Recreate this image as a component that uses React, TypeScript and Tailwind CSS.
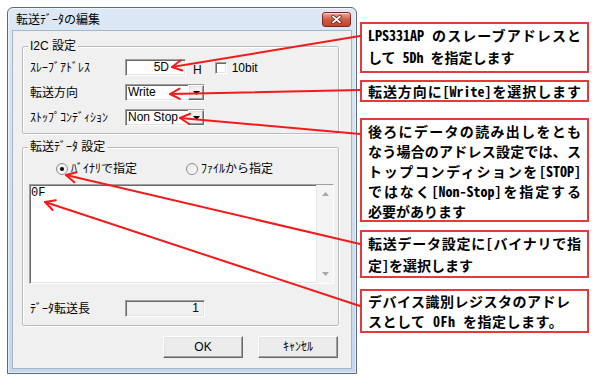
import React from "react";

const RED = "#f21b1b";

const sunken =
  "border border-t-[#a0a0a0] border-l-[#a0a0a0] border-b-white border-r-white shadow-[inset_1px_1px_0_#696969,inset_-1px_-1px_0_#e3e3e3]";
const raised =
  "border border-t-white border-l-white border-b-[#696969] border-r-[#696969] shadow-[inset_-1px_-1px_0_#a0a0a0,inset_1px_1px_0_#e3e3e3]";

function Arrow({ x1, y1, x2, y2 }: { x1: number; y1: number; x2: number; y2: number }) {
  const dx = x1 - x2;
  const dy = y1 - y2;
  const len = Math.hypot(dx, dy);
  const ux = dx / len;
  const uy = dy / len;
  const a = (28 * Math.PI) / 180;
  const L = 11;
  const w1x = x2 + L * (ux * Math.cos(a) - uy * Math.sin(a));
  const w1y = y2 + L * (ux * Math.sin(a) + uy * Math.cos(a));
  const w2x = x2 + L * (ux * Math.cos(-a) - uy * Math.sin(-a));
  const w2y = y2 + L * (ux * Math.sin(-a) + uy * Math.cos(-a));
  return (
    <g stroke={RED} strokeWidth={2} fill="none" strokeLinecap="round" strokeLinejoin="round">
      <line x1={x1} y1={y1} x2={x2} y2={y2} />
      <polyline points={`${w1x},${w1y} ${x2},${y2} ${w2x},${w2y}`} />
    </g>
  );
}

function DownTri({ color = "#000" }: { color?: string }) {
  return (
    <svg width="7" height="4" viewBox="0 0 7 4">
      <polygon points="0,0 7,0 3.5,4" fill={color} />
    </svg>
  );
}

function UpTri({ color = "#000" }: { color?: string }) {
  return (
    <svg width="7" height="4" viewBox="0 0 7 4">
      <polygon points="0,4 7,4 3.5,0" fill={color} />
    </svg>
  );
}

function Combo({ value }: { value: string }) {
  return (
    <div className={`w-[80px] h-[17px] bg-white flex ${sunken}`}>
      <div className="flex-1 pl-[2px] text-[12px] leading-[15px] text-black">{value}</div>
      <div className={`w-[16px] h-[15px] bg-[#f0f0f0] flex items-center justify-center ${raised}`}>
        <DownTri />
      </div>
    </div>
  );
}

function Radio({ checked }: { checked?: boolean }) {
  return (
    <div className="w-[12px] h-[12px] rounded-full border border-[#8e8f8f] bg-gradient-to-br from-[#e6e6e6] to-white flex items-center justify-center">
      {checked ? <div className="w-[4px] h-[4px] rounded-full bg-black" /> : null}
    </div>
  );
}

function J({ children }: { children: React.ReactNode }) {
  return <div className="text-justify [text-align-last:justify]">{children}</div>;
}

function CloseBtn() {
  return (
    <div className="mt-[4px] mr-[1px] w-[29px] h-[15px] rounded-[3px] border border-[#7b2a1f] bg-gradient-to-b from-[#eaa898] via-[#d25a46] to-[#c5432f] shadow-[inset_0_1px_0_rgba(255,255,255,0.5)] flex items-center justify-center">
      <svg width="11" height="9" viewBox="0 0 11 9">
        <path d="M2 1.5 L9 7.5 M9 1.5 L2 7.5" stroke="#5e1d14" strokeWidth="3.4" strokeLinecap="round" />
        <path d="M2 1.5 L9 7.5 M9 1.5 L2 7.5" stroke="#ffffff" strokeWidth="1.8" strokeLinecap="round" />
      </svg>
    </div>
  );
}

export default function App() {
  const dialogFont = { fontFamily: '"Liberation Sans", "Noto Sans CJK JP", sans-serif' };
  return (
    <div className="relative w-[601px] h-[386px] bg-white overflow-hidden flex items-start">
      {/* Dialog window */}
      <div
        className="ml-[7px] mt-[7px] w-[350px] h-[367px] shrink-0 rounded-t-[6px] border border-[#5f6b78] bg-gradient-to-b from-[#dce8f5] via-[#cfe0f1] to-[#c3d7ed] flex flex-col px-[4px] pb-[4px] shadow-[inset_0_0_0_1px_rgba(255,255,255,0.55)]"
        style={dialogFont}
      >
        <div className="h-[22px] flex items-start justify-between">
          <span className="pl-[4px] pt-[5px] text-[12px] leading-[14px] text-black">転送ﾃﾞｰﾀの編集</span>
          <CloseBtn />
        </div>
        <div className="flex-1 bg-[#f0f0f0] border border-[#a6b6c7] flex flex-col pl-[9px] pt-[15px] text-[12px] leading-[14px] text-black">
          {/* Group 1 */}
          <div className="relative w-[317px] h-[88px] border border-[#bcbcbc] rounded-[2px] shadow-[inset_1px_1px_0_#fff,1px_1px_0_#fff]">
            <span className="absolute left-[5px] -top-[8px] px-[2px] bg-[#f0f0f0]">I2C 設定</span>
            <div className="flex flex-col pl-[7px] pt-[12px] gap-[8px]">
              <div className="flex items-center h-[17px]">
                <span className="w-[95px]">ｽﾚｰﾌﾞｱﾄﾞﾚｽ</span>
                <div className={`w-[61px] h-[17px] bg-white text-right pr-[16px] leading-[15px] ${sunken}`}>5D</div>
                <span className="ml-[7px] mt-[5px]">H</span>
                <div className={`ml-[13px] w-[12px] h-[12px] bg-white ${sunken}`} />
                <span className="ml-[5px]">10bit</span>
              </div>
              <div className="flex items-center h-[17px]">
                <span className="w-[95px]">転送方向</span>
                <Combo value="Write" />
              </div>
              <div className="flex items-center h-[17px]">
                <span className="w-[95px]">ｽﾄｯﾌﾟｺﾝﾃﾞｨｼｮﾝ</span>
                <Combo value="Non Stop" />
              </div>
            </div>
          </div>

          {/* Group 2 */}
          <div className="relative mt-[13px] w-[317px] h-[179px] border border-[#bcbcbc] rounded-[2px] shadow-[inset_1px_1px_0_#fff,1px_1px_0_#fff] flex flex-col">
            <span className="absolute left-[5px] -top-[8px] px-[2px] bg-[#f0f0f0]">転送ﾃﾞｰﾀ 設定</span>
            <div className="flex items-center h-[13px] mt-[14px] pl-[33px]">
              <div className="flex items-center gap-[3px] w-[130px]">
                <Radio checked />
                <span>ﾊﾞｲﾅﾘで指定</span>
              </div>
              <div className="flex items-center gap-[3px]">
                <Radio />
                <span>ﾌｧｲﾙから指定</span>
              </div>
            </div>
            <div className={`mt-[9px] ml-[6px] w-[305px] h-[100px] bg-white flex ${sunken}`}>
              <div className="flex-1 pl-[1px] pt-[1px]" style={{ fontFamily: '"Liberation Mono", monospace' }}>
                0F
              </div>
              <div className="w-[17px] h-full bg-[#f4f4f4] border-l border-[#e8e8e8] flex flex-col items-center justify-between pt-[7px] pb-[7px]">
                <UpTri color="#a8a8a8" />
                <DownTri color="#a8a8a8" />
              </div>
            </div>
            <div className="flex items-center h-[17px] mt-[16px] pl-[7px]">
              <span className="w-[95px]">ﾃﾞｰﾀ転送長</span>
              <div className={`w-[80px] h-[17px] bg-[#f0f0f0] text-right pr-[5px] leading-[15px] ${sunken}`}>1</div>
            </div>
          </div>

          {/* Buttons */}
          <div className="mt-[10px] w-[317px] flex justify-end gap-[15px] pr-[1px]">
            <div className={`w-[80px] h-[22px] bg-[#ececec] flex items-center justify-center ${raised}`}>OK</div>
            <div className={`w-[80px] h-[22px] bg-[#ececec] flex items-center justify-center ${raised}`}>ｷｬﾝｾﾙ</div>
          </div>
        </div>
      </div>

      {/* Callouts */}
      <div
        className="ml-[3px] mt-[22px] flex flex-col font-bold text-black text-[14px] [font-feature-settings:'hwid']"
        style={{ fontFamily: '"Noto Sans CJK JP", sans-serif' }}
      >
        <div className="w-[229px] h-[51px] border-2 border-[#e33b3b] px-[6px] leading-[22px]">
          <J>LPS331AP のスレーブアドレスと</J>
          <div>して 5Dh を指定します</div>
        </div>
        <div className="mt-[7px] w-[229px] h-[22px] border-2 border-[#e33b3b] px-[6px] leading-[18px]">
          <J>転送方向に[Write]を選択します</J>
        </div>
        <div className="mt-[16px] w-[229px] h-[104px] border-2 border-[#e33b3b] px-[6px] pt-[1px] leading-[20px]">
          <J>後ろにデータの読み出しをとも</J>
          <J>なう場合のアドレス設定では、ス</J>
          <J>トップコンディションを[STOP]</J>
          <J>ではなく[Non-Stop]を指定する</J>
          <div>必要があります</div>
        </div>
        <div className="mt-[8px] w-[229px] h-[48px] border-2 border-[#e33b3b] px-[6px] leading-[22px]">
          <J>転送データ設定に[バイナリで指</J>
          <div>定]を選択します</div>
        </div>
        <div className="mt-[11px] w-[229px] h-[44px] border-2 border-[#e33b3b] px-[6px] leading-[20px] tracking-[0.5px]">
          <div>デバイス識別レジスタのアドレ</div>
          <div>スとして 0Fh を指定します。</div>
        </div>
      </div>

      {/* Arrows overlay */}
      <svg className="absolute inset-0 pointer-events-none" width="601" height="386">
        <Arrow x1={360} y1={36} x2={172} y2={67} />
        <Arrow x1={360} y1={90} x2={170} y2={94} />
        <Arrow x1={360} y1={134} x2={180} y2={118} />
        <Arrow x1={360} y1={244} x2={66} y2={175} />
        <Arrow x1={360} y1={306} x2={45} y2={202} />
      </svg>
    </div>
  );
}
